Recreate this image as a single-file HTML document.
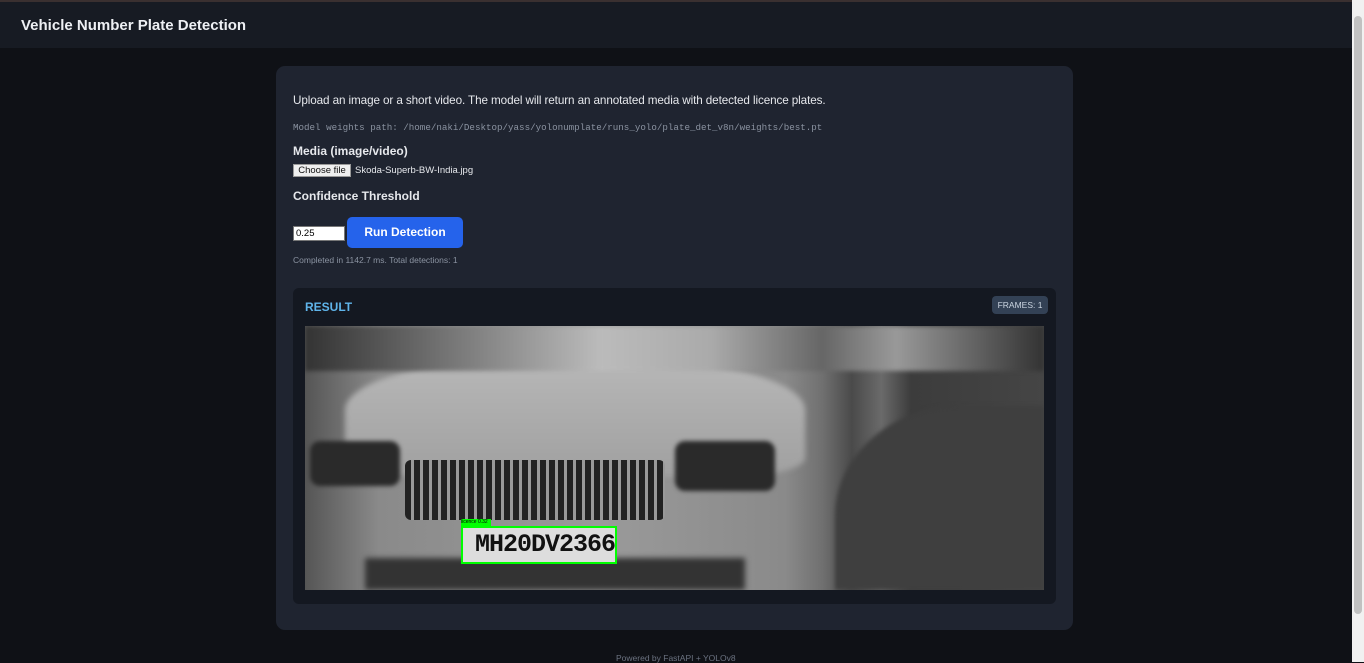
<!DOCTYPE html>
<html><head><style>
*{box-sizing:border-box;margin:0;padding:0}
body{width:1364px;height:662px;overflow:hidden;background:#0f1116;font-family:"Liberation Sans",sans-serif;position:relative}
.hdr{position:absolute;left:0;top:0;width:1352px;height:48px;background:#171b23;border-top:2px solid #3a3030}
.hdr h1{position:absolute;left:21px;top:15px;font-size:15px;color:#eef0f4;font-weight:bold}
.sb{position:absolute;right:0;top:0;width:12px;height:662px;background:#f1f1f1}
.sb div{position:absolute;left:2px;top:16px;width:8px;height:598px;background:#c1c1c1;border-radius:4px}
.card{position:absolute;left:276px;top:66px;width:797px;height:564px;background:#1f2430;border-radius:9px}
.t{position:absolute;color:#e6e8ec;white-space:nowrap}
.res{position:absolute;left:17px;top:222px;width:763px;height:316px;background:#141821;border-radius:6px}
.img{position:absolute;left:12px;top:38px;width:739px;height:264px;overflow:hidden;background:#888}
</style></head><body>
<div class="hdr"><h1>Vehicle Number Plate Detection</h1></div>
<div class="card">
<div class="t" style="left:17px;top:28px;font-size:11.7px;letter-spacing:-0.1px">Upload an image or a short video. The model will return an annotated media with detected licence plates.</div>
<div class="t" style="left:17px;top:56px;font-size:9.2px;font-family:'Liberation Mono',monospace;color:#8b93a1">Model weights path: /home/naki/Desktop/yass/yolonumplate/runs_yolo/plate_det_v8n/weights/best.pt</div>
<div class="t" style="left:17px;top:78px;font-size:12px;font-weight:bold">Media (image/video)</div>
<div style="position:absolute;left:17px;top:98px;width:58px;height:13px;background:#efefef;border:1px solid #999;font-size:9.5px;color:#111;text-align:center;line-height:11px">Choose file</div>
<div class="t" style="left:79px;top:99px;font-size:9.5px">Skoda-Superb-BW-India.jpg</div>
<div class="t" style="left:17px;top:123px;font-size:12px;font-weight:bold">Confidence Threshold</div>
<div style="position:absolute;left:17px;top:160px;width:52px;height:15px;background:#fff;border:1px solid #777;font-size:9.5px;padding-left:2px;line-height:13px">0.25</div>
<div style="position:absolute;left:71px;top:151px;width:116px;height:31px;background:#2563eb;border-radius:5px;color:#fff;font-weight:bold;font-size:12px;text-align:center;line-height:31px">Run Detection</div>
<div class="t" style="left:17px;top:189px;font-size:8.5px;color:#8b93a1">Completed in 1142.7 ms. Total detections: 1</div>
<div class="res">
<div class="t" style="left:12px;top:12px;font-size:12px;font-weight:bold;color:#5fb4ea">RESULT</div>
<div style="position:absolute;right:8px;top:8px;width:56px;height:18px;background:#334155;border-radius:4px;color:#cbd5e1;font-size:8.5px;text-align:center;line-height:18px">FRAMES: 1</div>
<div class="img">
<div style="position:absolute;left:0;top:0;width:739px;height:264px;background:linear-gradient(90deg,#555 0%,#8a8a8a 10%,#9a9a9a 40%,#8a8a8a 65%,#707070 70%,#4a4a4a 74%,#6a6a6a 78%,#3c3c3c 82%,#454545 100%)"></div>
<div style="position:absolute;left:40px;top:30px;width:460px;height:120px;background:linear-gradient(#b8b8b8,#a0a0a0);border-radius:45% 45% 15% 15%;filter:blur(3px)"></div>
<div style="position:absolute;left:0;top:0;width:739px;height:45px;background:linear-gradient(90deg,#333,#777 20%,#bbb 40%,#aaa 55%,#666 70%,#999 80%,#333);filter:blur(2px)"></div>
<div style="position:absolute;left:530px;top:80px;width:209px;height:184px;background:#3f3f3f;border-radius:60% 0 0 0;filter:blur(2px)"></div>
<div style="position:absolute;left:100px;top:134px;width:260px;height:60px;border-radius:6px;background:repeating-linear-gradient(90deg,#222 0 6px,#999 6px 9px)"></div>
<div style="position:absolute;left:5px;top:115px;width:90px;height:45px;background:#2a2a2a;border-radius:10px;filter:blur(2px)"></div>
<div style="position:absolute;left:370px;top:115px;width:100px;height:50px;background:#2a2a2a;border-radius:10px;filter:blur(2px)"></div>
<div style="position:absolute;left:60px;top:232px;width:380px;height:32px;background:#333;filter:blur(3px)"></div>
<div style="position:absolute;left:156px;top:193px;width:30px;height:7px;background:#00ff00;font-size:5px;line-height:7px">licence 0.32</div>
<div style="position:absolute;left:156px;top:200px;width:156px;height:38px;border:2px solid #00ff00;background:#ddd;font-family:'Liberation Mono',monospace;font-weight:bold;font-size:25px;color:#111;line-height:34px;padding-left:12px;letter-spacing:-1px">MH20DV2366</div>
</div>
</div>
</div>
<div class="t" style="left:616px;top:653px;font-size:8.5px;color:#6b7280">Powered by FastAPI + YOLOv8</div>
<div class="sb"><div></div></div>
</body></html>
